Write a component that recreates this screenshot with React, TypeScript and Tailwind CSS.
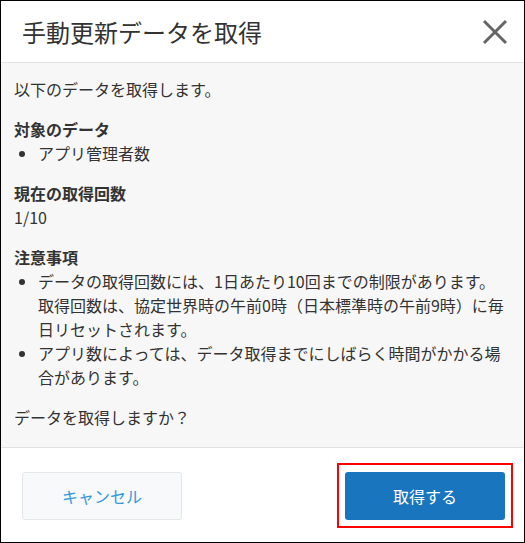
import React from "react";

const FONT = { fontFamily: '"Noto Sans CJK JP", "Noto Sans", sans-serif' };

function CloseIcon() {
  return (
    <svg width="26" height="26" viewBox="0 0 26 26" className="shrink-0">
      <path d="M2 2L24 24M24 2L2 24" stroke="#666666" strokeWidth="3" fill="none" />
    </svg>
  );
}

export default function App() {
  return (
    <div
      className="flex h-[543px] w-[525px] flex-col border border-black bg-white text-[#333333]"
      style={FONT}
    >
      {/* header */}
      <div className="flex h-[62px] shrink-0 items-center justify-between border-b border-[#e3e3e3] pl-[21px] pr-[13px]">
        <h1 className="text-[24px] leading-none font-normal text-[#333333]">手動更新データを取得</h1>
        <button className="flex h-8 w-8 items-center justify-center">
          <CloseIcon />
        </button>
      </div>

      {/* body */}
      <div className="flex h-[384px] shrink-0 flex-col gap-4 bg-[#f7f7f7] px-[13px] pt-[14px] pb-[18px] text-[16px] leading-6">
        <p>以下のデータを取得します。</p>
        <div>
          <div className="font-bold">対象のデータ</div>
          <ul className="list-disc pl-6">
            <li>アプリ管理者数</li>
          </ul>
        </div>
        <div>
          <div className="font-bold">現在の取得回数</div>
          <div>1/10</div>
        </div>
        <div>
          <div className="font-bold">注意事項</div>
          <ul className="list-disc pl-6">
            <li>
              データの取得回数には、1日あたり10回までの制限があります。取得回数は、協定世界時の午前0時（日本標準時の午前9時）に毎日リセットされます。
            </li>
            <li>アプリ数によっては、データ取得までにしばらく時間がかかる場合があります。</li>
          </ul>
        </div>
        <p>データを取得しますか？</p>
      </div>

      {/* footer */}
      <div className="flex flex-1 items-start justify-between border-t border-[#e3e3e3] pt-6 pl-[21px] pr-[19px]">
        <button className="h-12 w-[160px] rounded-[3px] border border-[#e3e7e8] bg-[#f7f9fa] text-[16px] text-[#3498db]">
          キャンセル
        </button>
        <div className="relative">
          <button className="h-12 w-[160px] rounded-[3px] bg-[#1a75bf] text-[16px] text-white">
            取得する
          </button>
          <span className="pointer-events-none absolute -top-[9px] -right-[8px] -bottom-[8px] -left-[8px] border-2 border-[#ff0000]" />
        </div>
      </div>
    </div>
  );
}
